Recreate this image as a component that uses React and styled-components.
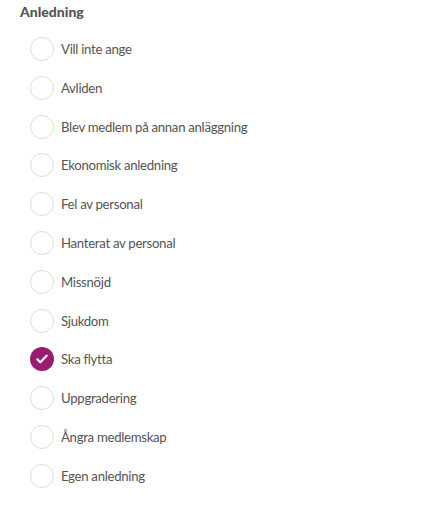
import React, { useState } from "react";
import styled, { createGlobalStyle } from "styled-components";

const GlobalStyle = createGlobalStyle`
  body {
    margin: 0;
    background: #fff;
    font-family: Lato, "Noto Sans", sans-serif;
  }
`;

const Wrapper = styled.div`
  padding: 3px 20px 0 20px;
`;

const Title = styled.h3`
  margin: 0;
  font-size: 14px;
  line-height: 18px;
  font-weight: 900;
  color: #555;
`;

const List = styled.div`
  display: flex;
  flex-direction: column;
  gap: 14.8px;
  padding: 16px 0 0 10px;
`;

const Row = styled.label`
  display: flex;
  align-items: center;
  gap: 7px;
  height: 24px;
  cursor: pointer;
`;

const Circle = styled.span`
  box-sizing: border-box;
  width: 24px;
  height: 24px;
  border-radius: 50%;
  flex-shrink: 0;
  display: flex;
  align-items: center;
  justify-content: center;
  border: ${(p) => (p.checked ? "none" : "1.5px solid #e0dcd6")};
  background: ${(p) => (p.checked ? "#9b1b72" : "#fff")};
`;

const Text = styled.span`
  font-size: 13.2px;
  letter-spacing: -0.3px;
  color: #555;
`;

const options = [
  "Vill inte ange",
  "Avliden",
  "Blev medlem på annan anläggning",
  "Ekonomisk anledning",
  "Fel av personal",
  "Hanterat av personal",
  "Missnöjd",
  "Sjukdom",
  "Ska flytta",
  "Uppgradering",
  "Ångra medlemskap",
  "Egen anledning",
];

const App = () => {
  const [selected, setSelected] = useState("Ska flytta");
  return (
    <Wrapper>
      <GlobalStyle />
      <Title>Anledning</Title>
      <List>
        {options.map((o) => (
          <Row key={o} onClick={() => setSelected(o)}>
            <Circle checked={selected === o}>
              {selected === o && (
                <svg width="14" height="14" viewBox="0 0 24 24" fill="none">
                  <path
                    d="M4 12.5l5 5L20 6.5"
                    stroke="#fff"
                    strokeWidth="3.8"
                    strokeLinecap="round"
                    strokeLinejoin="round"
                  />
                </svg>
              )}
            </Circle>
            <Text>{o}</Text>
          </Row>
        ))}
      </List>
    </Wrapper>
  );
};

export default App;
